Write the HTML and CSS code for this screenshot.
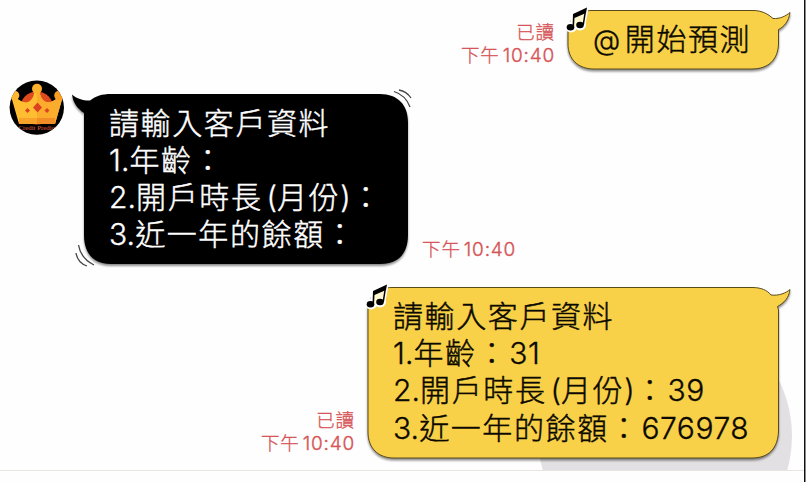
FILE: index.html
```html
<!DOCTYPE html>
<html lang="zh-Hant">
<head>
<meta charset="utf-8">
<title>Chat</title>
<link rel="stylesheet" href="styles.css">
</head>
<body>
<main class="chat">
  <div class="plus-disc"></div>
  <section class="row sent first">
    <div class="meta"><span>已讀</span><span>下午<b>10:40</b></span></div>
    <div class="bubble yellow short">
      <svg class="shape" width="240" height="76" viewBox="560 0 240 76">
        <path class="body" d="M591 10.500H753C762 10.500 768 14 773 18.500C780 19 786 16 790 12.500C789 21 784 27 778.500 29.500V44C778 60 768 69 752 69H594C578 69 568 59 568 44V33C568 19 577 10.500 591 10.500Z"/>
        <g transform="translate(566 6)"><path class="halo" d="M7 21V8L20 2L17 18M7 12L18 7"/><ellipse class="halo" cx="5" cy="21" rx="3.500" ry="3"/><ellipse class="halo" cx="14" cy="19" rx="3.500" ry="3"/><path class="gap" d="M8 11L18 7L17 18L8 21Z"/><path d="M7 8L21 1.500L20 7L8.500 12L8 21H6.500Z"/><path d="M18.500 6H20L18 19H16.500Z"/><ellipse cx="4.500" cy="21.300" rx="3.800" ry="3.200"/><ellipse cx="14" cy="19" rx="3.800" ry="3.200"/></g>
      </svg>
      <p><i class="at">@</i>開始預測</p>
    </div>
  </section>
  <section class="row received">
    <svg class="avatar" width="55" height="55" viewBox="9 80 55 55">
      <defs><clipPath id="disc"><circle cx="36.800" cy="107.600" r="27.200"/></clipPath></defs>
      <g clip-path="url(#disc)">
        <path d="M9 80H64V135H9Z"/>
        <circle cx="36.800" cy="108" r="16.500" fill="#df4a1e"/>
        <path d="M19 124L11 96L16 97C19 101 24 103 28 102C32 100 34 96 34.500 91H39.500C40 96 42 100 46 102C50 103 55 101 58 97L63 96L55 124Z" fill="#ffbd32"/>
        <path d="M37 91H39.500C40 96 42 100 46 102C50 103 55 101 58 97L63 96L55 124H37Z" fill="#fbac2d"/>
        <circle cx="37" cy="88.800" r="5" fill="#fdb12d"/><circle cx="14.500" cy="95.500" r="4.800" fill="#ffb72f"/><circle cx="59" cy="95.500" r="4.800" fill="#f79b25"/>
        <path d="M19 118H37V124H19Z" fill="#f9a22b"/><path d="M37 118H55V124H37Z" fill="#f28c25"/>
        <path d="M37.500 102.500L42 107.500L37.500 112.500L33 107.500ZM27.500 108L30 110.500L27.500 113L25 110.500ZM47 108L49.500 110.500L47 113L44.500 110.500Z" fill="#dc421f"/>
        <text x="18.500" y="130">Credit Predict</text>
      </g>
    </svg>
    <div class="bubble black">
      <svg class="shape" width="350" height="190" viewBox="66 84 350 190">
        <path class="body" d="M111 94H380C398 94 408 105 408 122V235C408 254 398 264 380 264H111C94 264 84 254 84 235V113C78 109 73 103 72 94.500C77 99 85 101 90 100.500C96 96 102 94 111 94Z"/>
        <path class="motion" d="M394 91.500C402 94 407 99 410 107M399 90C405 91 409 95 411 98M78.500 245C80 254 86 261 94 265M76 253C77 259 81 264 87 266"/>
      </svg>
      <p>請輸入客戶資料</p><p><b>1.</b>年齡：</p><p><b>2.</b>開戶時長<b class="open">(</b>月份<b>)</b>：</p><p><b>3.</b>近一年的餘額：</p>
    </div>
    <div class="meta"><span>下午<b>10:40</b></span></div>
  </section>
  <section class="row sent last">
    <div class="meta"><span>已讀</span><span>下午<b>10:40</b></span></div>
    <div class="bubble yellow">
      <svg class="shape" width="440" height="190" viewBox="360 277 440 190">
        <path class="body" d="M392 287.500H752C761 287.500 767 290 771 295C779 296 786 293 790 289.500C789 298 784 303 777.500 306.500L778.500 310V431C778 448 769 458 752 458H394C378 458 368 448 368 432V310C368 296 377 287.500 392 287.500Z"/>
        <g transform="translate(366 283)"><path class="halo" d="M7 21V8L20 2L17 18M7 12L18 7"/><ellipse class="halo" cx="5" cy="21" rx="3.500" ry="3"/><ellipse class="halo" cx="14" cy="19" rx="3.500" ry="3"/><path class="gap" d="M8 11L18 7L17 18L8 21Z"/><path d="M7 8L21 1.500L20 7L8.500 12L8 21H6.500Z"/><path d="M18.500 6H20L18 19H16.500Z"/><ellipse cx="4.500" cy="21.300" rx="3.800" ry="3.200"/><ellipse cx="14" cy="19" rx="3.800" ry="3.200"/></g>
      </svg>
      <p>請輸入客戶資料</p><p><b>1.</b>年齡：<b class="value">31</b></p><p><b>2.</b>開戶時長<b class="open">(</b>月份<b>)</b>：<b class="value">39</b></p><p><b>3.</b>近一年的餘額：<b class="value">676978</b></p>
    </div>
  </section>
</main>
</body>
</html>
```
FILE: styles.css
```css
* { box-sizing: border-box; }
body { margin: 0; background: #fefefe; }
.chat {
  position: relative;
  width: 806px;
  height: 482px;
  overflow: hidden;
  border-right: 1px solid #858b8b;
  box-shadow: inset -1px 0 #101010;
  font-family: Inter, "Noto Sans CJK TC", sans-serif;
  font-weight: 300;
}
.chat::after {
  content: "";
  position: absolute;
  top: 470px;
  left: 0;
  width: calc(100% - 1px);
  height: 12px;
  background: #fefefe;
  border-top: 1px solid #e8e5e0;
}
.plus-disc {
  position: absolute;
  left: 538px;
  top: 309px;
  width: 254px;
  height: 254px;
  border-radius: 50%;
  background: #e2e0e2;
}
.row { display: flex; position: relative; align-items: flex-end; }
.sent { justify-content: flex-end; padding-right: 26px; }
.first { padding-top: 10px; height: 69px; }
.received { margin-top: 25px; height: 170px; padding-left: 9px; }
.last { margin-top: 23px; height: 171px; }
.bubble { position: relative; height: 100%; padding: 11px 0 0 26px; }
.short { width: 212px; }
.last .bubble { width: 412px; }
.black { width: 324px; margin-left: 20px; padding: 10.500px 0 0 25px; color: #fff; }
.yellow { color: #0b0900; }
.shape { position: absolute; overflow: visible; }
.short .shape { left: -7px; top: -10px; }
.black .shape { left: -18px; top: -10px; }
.last .shape { left: -7px; top: -10px; }
.body { filter: drop-shadow(0 2px 1px rgb(0 0 0 / 45%)); }
.yellow .body { fill: #f9d149; stroke: #5a4a18; stroke-width: 1; }
.motion { fill: none; stroke: #444; stroke-width: 1.300; }
.halo { fill: #fff; stroke: #fff; stroke-width: 5; stroke-linejoin: round; }
.gap { fill: #fff7cf; }
p {
  position: relative;
  margin: 0;
  height: 37.200px;
  line-height: 37.200px;
  font-size: 30px;
  letter-spacing: 1.600px;
  white-space: nowrap;
  -webkit-text-stroke: 0.450px currentColor;
}
b { font-weight: 300; font-size: 30px; letter-spacing: 0.100px; -webkit-text-stroke: 0.350px currentColor; }
.value { letter-spacing: 0.550px; margin-left: 1px; }
.open { margin-left: 4px; }
.at { font-style: normal; font-size: 28px; margin-right: 3px; -webkit-text-stroke: 0.350px currentColor; }
.avatar { align-self: flex-start; margin-top: -14px; flex: none; }
.avatar text { font: 6.800px "Liberation Serif", serif; fill: #e0603f; }
.meta {
  display: flex;
  flex-direction: column;
  align-items: flex-end;
  color: #d65558;
  font-size: 18.500px;
  line-height: 23px;
  letter-spacing: 0.900px;
  margin-right: 12px;
  white-space: nowrap;
  -webkit-text-stroke: 0.300px currentColor;
}
.meta b { font-size: 19px; margin-left: 3px; letter-spacing: 0.800px; }
.first .meta { margin-bottom: 2px; }
.received .meta { margin: 0 0 3px 14px; }
.last .meta { margin-bottom: 3px; }
```
